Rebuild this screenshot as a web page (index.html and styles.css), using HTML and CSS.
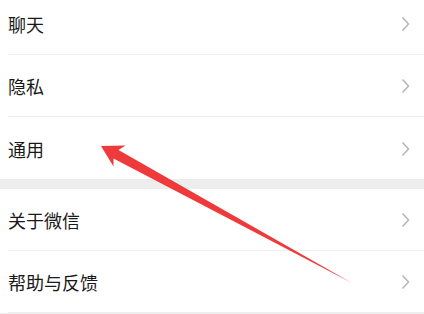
FILE: index.html
```html
<!DOCTYPE html>
<html lang="zh-CN">
<head>
  <meta charset="UTF-8">
  <meta name="viewport" content="width=device-width, initial-scale=1.0">
  <title>设置</title>
  <link rel="stylesheet" href="styles.css">
</head>
<body>
  <div class="page">
    <div class="group first">
      <div class="cell">
        <span class="label">聊天</span>
        <svg class="chevron" width="9" height="16" viewBox="0 0 9 16"><polyline points="1.5,1.5 7.5,8 1.5,14.5"/></svg>
      </div>
      <div class="cell">
        <span class="label">隐私</span>
        <svg class="chevron" width="9" height="16" viewBox="0 0 9 16"><polyline points="1.5,1.5 7.5,8 1.5,14.5"/></svg>
      </div>
      <div class="cell">
        <span class="label">通用</span>
        <svg class="chevron" width="9" height="16" viewBox="0 0 9 16"><polyline points="1.5,1.5 7.5,8 1.5,14.5"/></svg>
      </div>
    </div>

    <div class="group">
      <div class="cell">
        <span class="label">关于微信</span>
        <svg class="chevron" width="9" height="16" viewBox="0 0 9 16"><polyline points="1.5,1.5 7.5,8 1.5,14.5"/></svg>
      </div>
      <div class="cell">
        <span class="label">帮助与反馈</span>
        <svg class="chevron" width="9" height="16" viewBox="0 0 9 16"><polyline points="1.5,1.5 7.5,8 1.5,14.5"/></svg>
      </div>
    </div>

    <!-- annotation arrow pointing at 通用 -->
    <svg class="arrow" width="424" height="314" viewBox="0 0 424 314">
      <polygon points="101,146 125.5,145.5 118.5,150 352,283 113.5,158.5 113.5,166.5" fill="#ee3a3b"/>
    </svg>
  </div>
</body>
</html>
```

FILE: styles.css
```css
body {
  margin: 0;
  padding: 0;
  background-color: #ededed;
  font-family: "Noto Sans CJK SC", "Noto Sans", sans-serif;
  color: #191919;
  overflow: hidden;
}

.page {
  position: relative;
  width: 424px;
  height: 314px;
  overflow: hidden;
}

.group {
  background-color: #fff;
  margin-bottom: 10px;
}

.group.first {
  margin-top: -7px;
}

.cell {
  height: 62px;
  display: flex;
  align-items: center;
  justify-content: space-between;
  margin-left: 8px;
  padding-right: 14px;
  border-bottom: 1px solid #efefef;
  box-sizing: border-box;
}

.group.first .cell:last-child {
  border-bottom: none;
}

.label {
  font-size: 18px;
  line-height: 1;
  padding-top: 1px;
}

.chevron {
  fill: none;
  stroke: #b5b5b5;
  stroke-width: 1.5;
  margin-top: 1px;
}

.arrow {
  position: absolute;
  left: 0;
  top: 0;
  pointer-events: none;
}
```
